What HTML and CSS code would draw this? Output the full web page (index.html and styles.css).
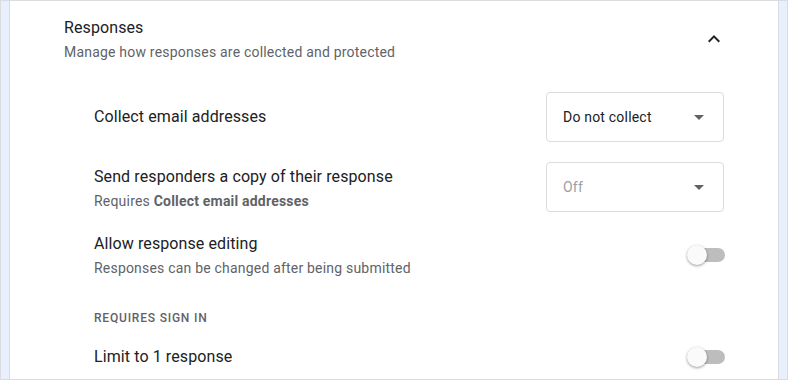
FILE: index.html
```html
<!DOCTYPE html>
<html lang="en">
<head>
    <meta charset="UTF-8">
    <meta name="viewport" content="width=device-width, initial-scale=1.0">
    <title>Settings - Responses</title>
    <link rel="stylesheet" href="styles.css">
</head>
<body>

    <!-- Settings card -->
    <div class="card">

        <!-- Section header -->
        <div class="section-header">
            <div class="section-text">
                <div class="section-title">Responses</div>
                <div class="section-desc">Manage how responses are collected and protected</div>
            </div>
            <button class="collapse-btn" aria-label="Collapse">
                <svg width="24" height="24" viewBox="0 0 24 24">
                    <path d="M7.41 15.41 12 10.83l4.59 4.58L18 14l-6-6-6 6z" fill="#202124"/>
                </svg>
            </button>
        </div>

        <!-- Settings rows -->
        <div class="setting-row row-collect">
            <div class="setting-text">
                <div class="setting-title">Collect email addresses</div>
            </div>
            <div class="dropdown">
                <span class="dropdown-value">Do not collect</span>
                <span class="dropdown-arrow"></span>
            </div>
        </div>

        <div class="setting-row row-copy">
            <div class="setting-text with-pad">
                <div class="setting-title">Send responders a copy of their response</div>
                <div class="setting-desc">Requires <strong>Collect email addresses</strong></div>
            </div>
            <div class="dropdown disabled">
                <span class="dropdown-value">Off</span>
                <span class="dropdown-arrow"></span>
            </div>
        </div>

        <div class="setting-row row-edit">
            <div class="setting-text">
                <div class="setting-title">Allow response editing</div>
                <div class="setting-desc">Responses can be changed after being submitted</div>
            </div>
            <div class="switch">
                <span class="switch-track"></span>
                <span class="switch-thumb"></span>
            </div>
        </div>

        <div class="group-label">Requires sign in</div>

        <div class="setting-row row-limit">
            <div class="setting-text">
                <div class="setting-title">Limit to 1 response</div>
            </div>
            <div class="switch">
                <span class="switch-track"></span>
                <span class="switch-thumb"></span>
            </div>
        </div>

    </div>

</body>
</html>
```

FILE: styles.css
```css
body {
    margin: 0;
    padding: 0 8px;
    height: 380px;
    box-sizing: border-box;
    background-color: #e8f0fe;
    border: 1px solid #dadce0;
    font-family: Roboto, 'Liberation Sans', sans-serif;
    color: #202124;
    overflow: hidden;
}

/* White card */
.card {
    background-color: #fff;
    border-left: 1px solid #dadce0;
    border-right: 1px solid #dadce0;
    height: 100%;
    padding: 0 54px 0 54px;
    box-sizing: border-box;
}

/* Section header */
.section-header {
    display: flex;
    align-items: flex-start;
    justify-content: space-between;
    padding-top: 15px;
}

.section-title {
    font-size: 16px;
    line-height: 24px;
    letter-spacing: 0.1px;
}

.section-desc {
    font-size: 14px;
    line-height: 20px;
    letter-spacing: 0.2px;
    color: #5f6368;
    margin-top: 2px;
}

.collapse-btn {
    background: none;
    border: none;
    padding: 0;
    margin-top: 11px;
    margin-right: -2px;
    width: 24px;
    height: 24px;
    cursor: pointer;
}

.collapse-btn svg {
    display: block;
}

/* Setting rows */
.setting-row {
    display: flex;
    align-items: center;
    justify-content: space-between;
    padding-left: 30px;
}

.row-collect {
    margin-top: 30px;
}

.row-copy {
    margin-top: 20px;
    align-items: flex-start;
}

.row-edit {
    margin-top: 20px;
}

.row-limit {
    margin-top: 19px;
}

.setting-text.with-pad {
    padding-top: 3px;
}

.setting-title {
    font-size: 16px;
    line-height: 24px;
    letter-spacing: 0.1px;
}

.setting-desc {
    font-size: 14px;
    line-height: 20px;
    letter-spacing: 0.2px;
    color: #5f6368;
    margin-top: 2px;
}

.setting-desc strong {
    font-weight: 700;
}

/* Dropdown */
.dropdown {
    width: 178px;
    height: 50px;
    box-sizing: border-box;
    border: 1px solid #dadce0;
    border-radius: 4px;
    display: flex;
    align-items: center;
    justify-content: space-between;
    padding: 0 19px 0 16px;
    font-size: 14px;
    letter-spacing: 0.2px;
}

.dropdown.disabled .dropdown-value {
    color: #9aa0a6;
}

.dropdown-arrow {
    width: 0;
    height: 0;
    border-left: 5px solid transparent;
    border-right: 5px solid transparent;
    border-top: 5px solid #5f6368;
}

/* Group label */
.group-label {
    padding-left: 30px;
    margin-top: 32px;
    font-size: 12px;
    line-height: 16px;
    font-weight: 500;
    letter-spacing: 0.8px;
    text-transform: uppercase;
    color: #5f6368;
}

/* Toggle switch */
.switch {
    position: relative;
    width: 38px;
    height: 20px;
    margin-right: -1px;
}

.switch-track {
    position: absolute;
    right: 0;
    top: 3px;
    width: 36px;
    height: 14px;
    border-radius: 7px;
    background-color: #bdbdbd;
}

.switch-thumb {
    position: absolute;
    left: 0;
    top: 0;
    width: 20px;
    height: 20px;
    border-radius: 50%;
    background-color: #fafafa;
    box-shadow: 0 1px 3px rgba(0, 0, 0, 0.4);
}
```
